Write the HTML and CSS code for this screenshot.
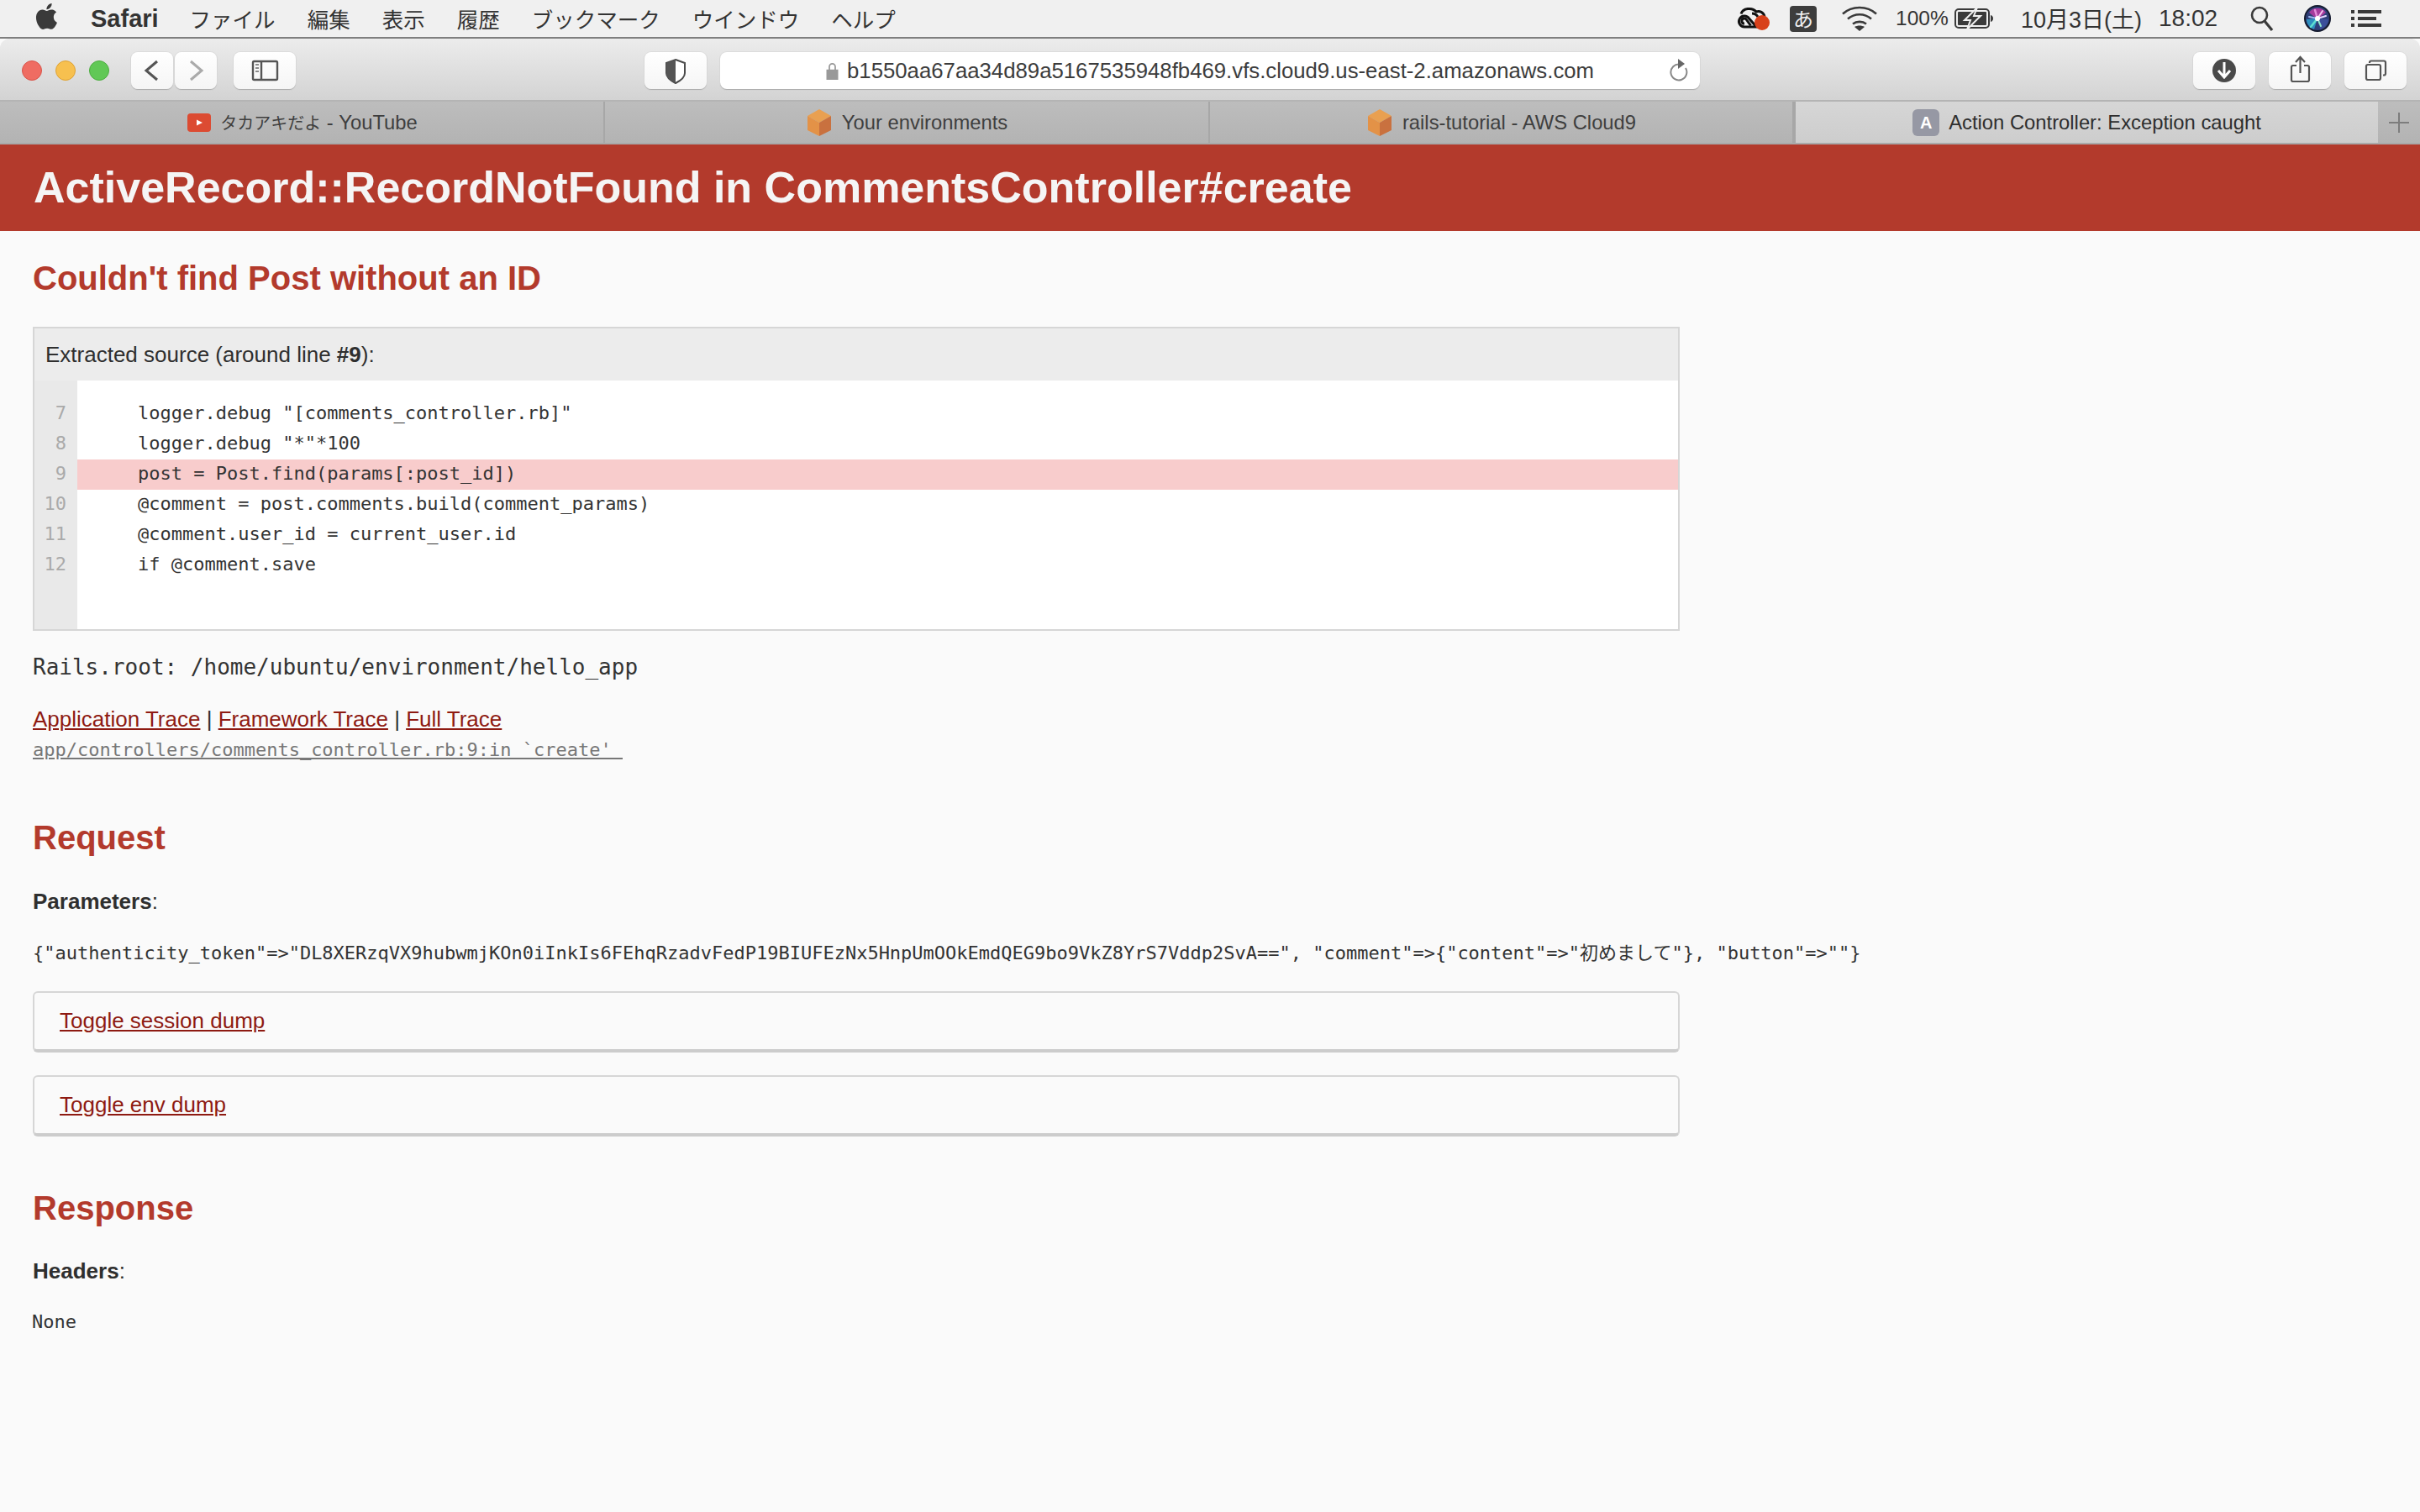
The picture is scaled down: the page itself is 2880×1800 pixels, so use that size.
FILE: index.html
```html
<!DOCTYPE html>
<html lang="ja">
<head>
<meta charset="utf-8">
<title>Action Controller: Exception caught</title>
<link rel="stylesheet" href="styles.css">
</head>
<body>
<div class="menubar">
  <svg class="apple" viewBox="0 0 24 24"><path d="M18.71 19.5c-.83 1.24-1.71 2.45-3.05 2.47-1.34.03-1.77-.79-3.29-.79-1.53 0-2 .77-3.27.82-1.31.05-2.3-1.32-3.14-2.53C4.25 17 2.94 12.45 4.7 9.39c.87-1.52 2.43-2.48 4.12-2.51 1.28-.02 2.5.87 3.29.87.78 0 2.26-1.07 3.8-.91.65.03 2.47.26 3.64 1.98-.09.06-2.17 1.28-2.15 3.81.03 3.02 2.65 4.03 2.68 4.04-.03.07-.42 1.44-1.38 2.83M13 3.5c.73-.83 1.94-1.46 2.94-1.5.13 1.17-.34 2.35-1.04 3.19-.69.85-1.83 1.51-2.95 1.42-.15-1.15.41-2.35 1.05-3.11z"/></svg>
  <span class="appname">Safari</span>
  <nav class="menus">
    <span>ファイル</span><span>編集</span><span>表示</span><span>履歴</span><span>ブックマーク</span><span>ウインドウ</span><span>ヘルプ</span>
  </nav>
  <div class="status">
    <svg class="st-cc" viewBox="0 0 42 28"><g fill="none" stroke="#111" stroke-width="3"><path d="M30 24H11a6.500 6.500 0 1 1 5.500-10l8 9"/><path d="M11 20a3 3 0 1 1 2.500-4.500l5 7"/><path d="M7 8.500C9 2 20 0 25 6c4-1.500 9 .5 10 6"/><path d="M20 8c3 0 5 1 7 4"/></g><circle cx="32" cy="19" r="9" fill="#d8401a"/></svg>
    <span class="st-kana">あ</span>
    <svg class="st-wifi" viewBox="0 0 42 30"><g fill="none" stroke="#3a3a3a" stroke-width="2.600"><path d="M1 9.500c11-10 29-10 40 0"/><path d="M7 15.500c8-7 20-7 28 0"/><path d="M13 21.500c4.500-3.500 11.500-3.500 16 0"/></g><path d="M21 30l-6-5c3.500-2 8.500-2 12 0z" fill="#3a3a3a"/></svg>
    <span class="st-pct">100%</span>
    <svg class="st-batt" viewBox="0 0 46 24"><rect x="1" y="1" width="40" height="22" rx="4" fill="none" stroke="#3a3a3a" stroke-width="2"/><rect x="4" y="4" width="34" height="16" rx="1" fill="#3a3a3a"/><path d="M43 8c2 .5 3 2 3 4s-1 3.500-3 4z" fill="#3a3a3a"/><path d="M27 -1L12 14h7l-4 11 16-16h-8z" fill="#3a3a3a" stroke="#f0f0f0" stroke-width="2"/></svg>
    <span class="st-date">10月3日(土)</span>
    <span class="st-time">18:02</span>
    <svg class="st-search" viewBox="0 0 28 30"><circle cx="11" cy="11" r="9" fill="none" stroke="#3a3a3a" stroke-width="2.600"/><path d="M17 18l9 11" stroke="#3a3a3a" stroke-width="3.200" fill="none"/></svg>
    <svg class="st-siri" viewBox="0 0 32 32"><circle cx="16" cy="16" r="16" fill="#141a2e"/><circle cx="16" cy="16" r="14" fill="#2f3f78"/><path d="M6 9C10 2 22 2 26 9L16 17z" fill="#a63a9c"/><path d="M3 17c0 6 4 10 9 12l4-13z" fill="#2e8fc0"/><path d="M29 17c0 6-5 10-10 12l-3-13z" fill="#3a4f9a"/><g stroke-linecap="round" fill="none"><path d="M16 16L8 26" stroke="#5fe0d0" stroke-width="2.500"/><path d="M16 16L20 25" stroke="#8fe6c8" stroke-width="2"/><path d="M16 16L26 13" stroke="#e6d7ff" stroke-width="2"/><path d="M16 16L13 6" stroke="#e58ad8" stroke-width="2.500"/><path d="M16 16L22 7" stroke="#f3c6ee" stroke-width="2"/><path d="M16 16L6 14" stroke="#9fb8f0" stroke-width="2"/></g><circle cx="16" cy="16" r="3" fill="#ffffff"/></svg>
    <svg class="st-list" viewBox="0 0 36 24"><g fill="#3a3a3a"><rect x="0" y="2" width="4" height="4"/><rect x="0" y="10" width="4" height="4"/><rect x="0" y="18" width="4" height="4"/><rect x="8" y="2" width="28" height="4"/><rect x="8" y="10" width="22" height="4"/><rect x="8" y="18" width="28" height="4"/></g></svg>
  </div>
</div>

<div class="window">
  <div class="toolbar">
    <div class="lights"><span class="light red"></span><span class="light yellow"></span><span class="light green"></span></div>
    <button class="tbtn nav back"><svg viewBox="0 0 50 44"><path d="M31 11L18 22l13 11" fill="none" stroke="#555" stroke-width="3"/></svg></button>
    <button class="tbtn nav fwd"><svg viewBox="0 0 50 44"><path d="M19 11l13 11-13 11" fill="none" stroke="#aaa" stroke-width="3"/></svg></button>
    <button class="tbtn wide side"><svg viewBox="0 0 74 44"><rect x="23" y="11" width="29" height="22" rx="1.500" fill="none" stroke="#555" stroke-width="2.400"/><path d="M33 11v22" stroke="#555" stroke-width="2.400"/><path d="M26 15h4M26 19h4M26 23h4" stroke="#8a8a8a" stroke-width="2"/></svg></button>
    <button class="tbtn wide shield"><svg viewBox="0 0 74 44"><path d="M37 9l11 4v12c0 5-5 9-11 12-6-3-11-7-11-12V13z" fill="#fff" stroke="#4a4a4a" stroke-width="2"/><path d="M37 9l-11 4v12c0 5 5 9 11 12z" fill="#555"/></svg></button>
    <div class="urlfield">
      <span class="url-center">
        <svg class="lock" viewBox="0 0 16 24"><path d="M4 11V6a4 4 0 0 1 8 0v5" fill="none" stroke="#999" stroke-width="2"/><rect x="0" y="10" width="16" height="14" fill="#999"/></svg>
        <span class="url">b1550aa67aa34d89a5167535948fb469.vfs.cloud9.us-east-2.amazonaws.com</span>
      </span>
      <svg class="reload" viewBox="0 0 24 28"><path d="M14 6.500A9.500 9.500 0 1 0 21 11" fill="none" stroke="#888" stroke-width="2"/><path d="M12 0l8 6-8 6z" fill="#666"/></svg>
    </div>
    <button class="tbtn wide dl"><svg viewBox="0 0 74 44"><circle cx="37" cy="22" r="14" fill="#4a4a4a"/><path d="M37 12v17M30 22l7 8 7-8" fill="none" stroke="#fff" stroke-width="3"/></svg></button>
    <button class="tbtn wide gap16"><svg viewBox="0 0 74 44"><path d="M33 16h-4a2 2 0 0 0-2 2v15a2 2 0 0 0 2 2h17a2 2 0 0 0 2-2V18a2 2 0 0 0-2-2h-4" fill="none" stroke="#555" stroke-width="2.200"/><path d="M37.500 25V7M32 12l5.500-6 5.500 6" fill="none" stroke="#555" stroke-width="2.200"/></svg></button>
    <button class="tbtn wide gap16"><svg viewBox="0 0 74 44"><rect x="26" y="15" width="17" height="18" rx="2" fill="none" stroke="#555" stroke-width="2.200"/><path d="M30 13v-0.500a2 2 0 0 1 2-2h15a2 2 0 0 1 2 2v13a2 2 0 0 1-2 2h-1" fill="none" stroke="#555" stroke-width="2.200"/></svg></button>
  </div>
  <div class="tabs">
    <div class="tab t1">
      <svg class="fav-yt" viewBox="0 0 28 22"><rect width="28" height="22" rx="4" fill="#dc4b32"/><path d="M11 7.500l7 3.500-7 3.500z" fill="#fff"/></svg>
      <span><span class="tab-ja">タカアキだよ</span> - YouTube</span>
    </div>
    <div class="tab t2">
      <svg class="fav-cube" viewBox="0 0 32 32"><path d="M16 0l14 8-14 8L2 8z" fill="#e9a051"/><path d="M2 8l14 8v16L2 25z" fill="#e39247"/><path d="M30 8L16 16v16l14-7z" fill="#c9713f"/></svg>
      <span>Your environments</span>
    </div>
    <div class="tab t3">
      <svg class="fav-cube" viewBox="0 0 32 32"><path d="M16 0l14 8-14 8L2 8z" fill="#e9a051"/><path d="M2 8l14 8v16L2 25z" fill="#e39247"/><path d="M30 8L16 16v16l14-7z" fill="#c9713f"/></svg>
      <span>rails-tutorial - AWS Cloud9</span>
    </div>
    <div class="tab t4 active">
      <span class="fav-a">A</span>
      <span>Action Controller: Exception caught</span>
    </div>
    <div class="tab-plus"><svg viewBox="0 0 24 24"><path d="M12 0v24M0 12h24" stroke="#7d7d7d" stroke-width="2" fill="none"/></svg></div>
  </div>
</div>

<header class="page-header"><h1>ActiveRecord::RecordNotFound in CommentsController#create</h1></header>

<main class="page">
  <h2 class="h-first">Couldn't find Post without an ID</h2>

  <section class="source">
    <div class="source-head">Extracted source (around line <strong>#9</strong>):</div>
    <div class="source-body">
      <div class="gutter">
        <div class="num">7</div><div class="num">8</div><div class="num">9</div><div class="num">10</div><div class="num">11</div><div class="num">12</div>
      </div>
      <div class="code">
        <div class="line">    logger.debug "[comments_controller.rb]"</div>
        <div class="line">    logger.debug "*"*100</div>
        <div class="line hl">    post = Post.find(params[:post_id])</div>
        <div class="line">    @comment = post.comments.build(comment_params)</div>
        <div class="line">    @comment.user_id = current_user.id</div>
        <div class="line">    if @comment.save</div>
      </div>
    </div>
  </section>

  <p class="rails-root">Rails.root: /home/ubuntu/environment/hello_app</p>
  <p class="links"><a href="#">Application Trace</a> | <a href="#">Framework Trace</a> | <a href="#">Full Trace</a></p>
  <p class="trace"><a href="#">app/controllers/comments_controller.rb:9:in `create' </a></p>

  <h2 class="h-request">Request</h2>
  <p class="label label-params"><strong>Parameters</strong>:</p>
  <p class="mono params">{"authenticity_token"=&gt;"DL8XERzqVX9hubwmjKOn0iInkIs6FEhqRzadvFedP19BIUFEzNx5HnpUmOOkEmdQEG9bo9VkZ8YrS7Vddp2SvA==", "comment"=&gt;{"content"=&gt;"初めまして"}, "button"=&gt;""}</p>
  <div class="dump dump-first"><a href="#">Toggle session dump</a></div>
  <div class="dump dump-second"><a href="#">Toggle env dump</a></div>

  <h2 class="h-response">Response</h2>
  <p class="label label-headers"><strong>Headers</strong>:</p>
  <p class="mono none">None</p>
</main>
</body>
</html>
```
FILE: styles.css
```css
* { box-sizing: border-box; }
html, body { margin: 0; padding: 0; }
body {
  width: 2880px;
  height: 1800px;
  overflow: hidden;
  background: #fafafa;
  color: #2f2f2f;
  font-family: "Liberation Sans", "Noto Sans CJK JP", sans-serif;
}

/* macOS menu bar */
.menubar {
  height: 46px;
  display: flex;
  align-items: center;
  background: #f0f0f0;
  border-bottom: 2px solid #7f7f7f;
  color: #333;
  font-size: 26px;
  padding-left: 37px;
}
.apple { width: 37px; height: 37px; fill: #3a3a3a; margin-top: -5px; }
.appname { font-weight: 700; font-size: 29px; margin-left: 34px; color: #333; }
.menus { display: flex; gap: 38px; margin-left: 37px; margin-top: -2px; font-family: "Noto Sans CJK JP", sans-serif; font-size: 25.500px; font-weight: 400; }
.status { margin-left: auto; display: flex; align-items: center; height: 44px; }
.st-cc { width: 42px; height: 28px; }
.st-kana { width: 32px; height: 31px; margin-left: 23px; background: #3d3d3d; color: #f0f0f0; border-radius: 4px; text-align: center; font: 400 24px/29px "Noto Sans CJK JP", sans-serif; }
.st-wifi { width: 42px; height: 30px; margin-left: 30px; }
.st-pct { margin-left: 22px; font-size: 24.500px; width: 61px; white-space: nowrap; }
.st-batt { width: 46px; height: 24px; margin-left: 9px; }
.st-date { margin-left: 33px; margin-top: -2px; font-size: 27px; width: 145px; white-space: nowrap; }
.st-time { margin-left: 19px; font-size: 28px; width: 72px; }
.st-search { width: 28px; height: 30px; margin-left: 37px; }
.st-siri { width: 32px; height: 32px; margin-left: 36px; }
.st-list { width: 36px; height: 24px; margin-left: 24px; margin-right: 46px; }

/* Safari chrome */
.window { height: 126px; border-radius: 12px 12px 0 0; overflow: hidden; background: linear-gradient(#ececec, #d3d3d3); }
.toolbar {
  height: 75px;
  display: flex;
  align-items: flex-start;
  padding: 16px 0 0 26px;
  background: linear-gradient(#ececec, #d3d3d3);
  border-bottom: 2px solid #b4b4b4;
}
.lights { display: flex; gap: 16px; margin-top: 10px; }
.light { width: 24px; height: 24px; border-radius: 50%; }
.red { background: #ef6c62; border: 1px solid #d9544a; }
.yellow { background: #f7c04f; border: 1px solid #dea234; }
.green { background: #61c856; border: 1px solid #4cad40; }

.tbtn {
  padding: 0;
  height: 44px;
  background: linear-gradient(#ffffff, #f5f5f5);
  border: 0;
  border-radius: 8px;
  box-shadow: 0 1px 1px #a9a9a9, 0 0 0 1px #dcdcdc;
  display: block;
}
.tbtn svg { display: block; width: 100%; height: 100%; }
.nav { width: 50px; }
.back { margin-left: 26px; }
.fwd { margin-left: 2px; }
.wide { width: 74px; }
.side { margin-left: 20px; }
.shield { margin-left: 415px; }
.dl { margin-left: 587px; }
.gap16 { margin-left: 16px; }

.urlfield {
  width: 1166px;
  height: 44px;
  margin-left: 16px;
  background: #ffffff;
  border-radius: 8px;
  box-shadow: 0 1px 1px #a9a9a9, 0 0 0 1px #dcdcdc;
  display: flex;
  align-items: center;
  position: relative;
}
.url-center { display: flex; align-items: center; margin-left: 126px; }
.lock { width: 15px; height: 21px; margin-right: 10px; }
.url { font-size: 25.750px; color: #3c3c3c; white-space: nowrap; }
.reload { width: 24px; height: 28px; position: absolute; right: 14px; top: 8px; }

.tabs {
  height: 51px;
  display: flex;
  background: linear-gradient(#bdbdbd, #b3b3b3);
  border-bottom: 2px solid #a9a9a9;
  font-size: 23.800px;
  color: #3f3f3f;
}
.tab { display: flex; align-items: center; justify-content: center; gap: 11px; border-right: 2px solid #a7a7a7; white-space: nowrap; }
.tab-ja { font-size: 20px; }
.t1 { width: 720px; padding-left: 2px; }
.t2 { width: 720px; }
.t3 { width: 695px; }
.t4 { width: 695px; border-left: 2px solid #a7a7a7; border-right: 0; }
.active { background: linear-gradient(#d6d6d6, #cdcdcd); color: #2e2e2e; }
.fav-yt { width: 28px; height: 22px; }
.fav-cube { width: 32px; height: 32px; }
.fav-a { width: 32px; height: 32px; border-radius: 6px; background: #9698a4; color: #fff; text-align: center; font-size: 20px; font-weight: 700; line-height: 32px; }
.tab-plus { flex: 1; display: flex; align-items: center; justify-content: center; }
.tab-plus svg { width: 24px; height: 24px; }

/* Rails error page */
.page-header {
  height: 103px;
  display: flex;
  align-items: center;
  padding-left: 40px;
  background: #b33a2c;
  color: #f5f5f5;
}
h1 { margin: 0; font-size: 52px; line-height: 63px; font-weight: 700; }

.page { padding: 0 39px; }
h2 { margin: 0; color: #b33a2c; font-size: 40px; line-height: 44px; font-weight: 700; }
p { margin: 0; }
.h-first { margin-top: 34px; }
.h-request { margin-top: 66px; }
.h-response { margin-top: 63px; }

.source {
  width: 1960px;
  margin-top: 36px;
  border: 2px solid #d6d6d6;
  background: #e9e9e9;
}
.source-head { height: 62px; padding-left: 13px; line-height: 62px; font-size: 26px; background: #ececec; color: #2f2f2f; }
.source-body { height: 296px; display: flex; font-family: "DejaVu Sans Mono", monospace; font-size: 22px; line-height: 34px; }
.gutter { width: 51px; padding-top: 22px; background: #e9e9e9; color: #aaaaaa; text-align: right; }
.num { padding-right: 13px; height: 36px; }
.code { flex: 1; padding-top: 22px; background: #ffffff; color: #333; }
.line { padding-left: 19px; white-space: pre; height: 36px; }
.hl { background: #f8cccc; }

.rails-root { margin-top: 25px; font: 26px/36px "DejaVu Sans Mono", monospace; color: #333; }
.links { margin-top: 26px; font-size: 26px; line-height: 36px; }
a { color: #8e1a12; }
.trace { margin-top: 3px; font: 22px/32px "DejaVu Sans Mono", monospace; white-space: pre; }
.trace a { color: #777; }
.label { font-size: 26px; line-height: 36px; }
.label-params { margin-top: 36px; }
.label-headers { margin-top: 35px; }
.mono { font: 22px/32px "DejaVu Sans Mono", "Noto Sans CJK JP", monospace; color: #333; white-space: nowrap; }
.params { margin-top: 28px; }
.none { margin-top: 27px; margin-left: -1px; }

.dump {
  width: 1960px;
  height: 73px;
  padding-left: 30px;
  font-size: 26px;
  line-height: 67px;
  border: 2px solid #d6d6d6;
  border-bottom: 4px solid #cccccc;
  border-radius: 6px;
}
.dump-first { margin-top: 29px; }
.dump-second { margin-top: 27px; }
```
